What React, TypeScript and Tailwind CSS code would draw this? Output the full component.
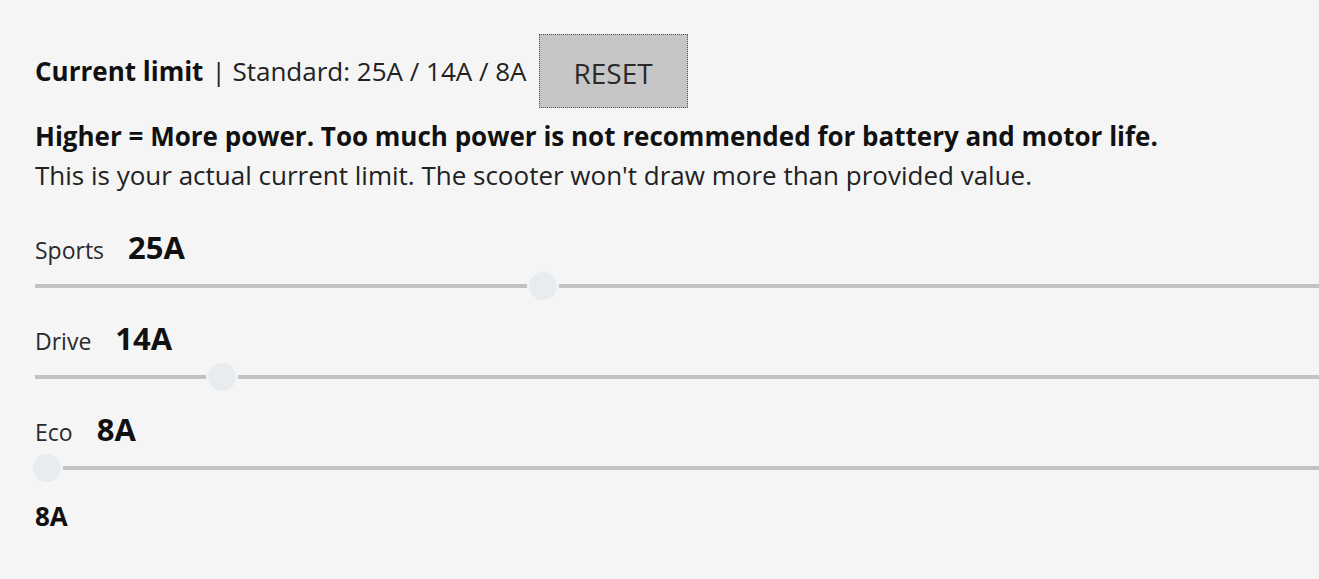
import React from "react";

const MIN = 8;
const PX_PER_A = 29.2;

function Slider({ label, value }: { label: string; value: number }) {
  const left = (value - MIN) * PX_PER_A;
  return (
    <div className="flex flex-col">
      <div className="flex items-baseline gap-[24px] h-[40px]">
        <span className="text-[23px] leading-[40px] text-[#2a2a2a]">{label}</span>
        <span className="text-[31px] leading-[40px] font-bold text-[#111]">{value}A</span>
      </div>
      <div className="relative h-[28px] mt-[5px]">
        <div className="absolute left-0 right-[-20px] top-[12px] h-[4px] bg-[#c2c2c2]" />
        <div
          className="absolute top-0 h-[28px] w-[28px] rounded-full bg-[#e9ecef] ring-[2px] ring-[#f5f5f5]"
          style={{ left: `${left - 2}px` }}
        />
      </div>
    </div>
  );
}

export default function App() {
  return (
    <div
      className="min-h-[579px] w-full overflow-hidden bg-[#f5f5f5] pl-[35px] pt-[34px] text-[#111]"
      style={{ fontFamily: '"Open Sans", sans-serif' }}
    >
      <div className="flex items-center h-[74px]">
        <span className="text-[26px] font-bold">Current limit</span>
        <span className="text-[26px] text-[#222] ml-[8px]">| Standard: 25A / 14A / 8A</span>
        <button className="ml-[12px] h-[74px] w-[149px] border border-dotted border-[#555] bg-[#c6c6c6] pt-[4px] text-[28px] text-[#2a2a2a]">
          RESET
        </button>
      </div>
      <div className="mt-[9px] text-[26px] font-bold leading-[39px]">
        Higher = More power. Too much power is not recommended for battery and motor life.
      </div>
      <div className="text-[26px] leading-[39px] text-[#222]">
        This is your actual current limit. The scooter won't draw more than provided value.
      </div>
      <div className="mt-[32px] flex flex-col gap-[18px]">
        <Slider label="Sports" value={25} />
        <Slider label="Drive" value={14} />
        <Slider label="Eco" value={8} />
      </div>
      <div className="mt-[16px] text-[26px] leading-[36px] font-bold">8A</div>
    </div>
  );
}
